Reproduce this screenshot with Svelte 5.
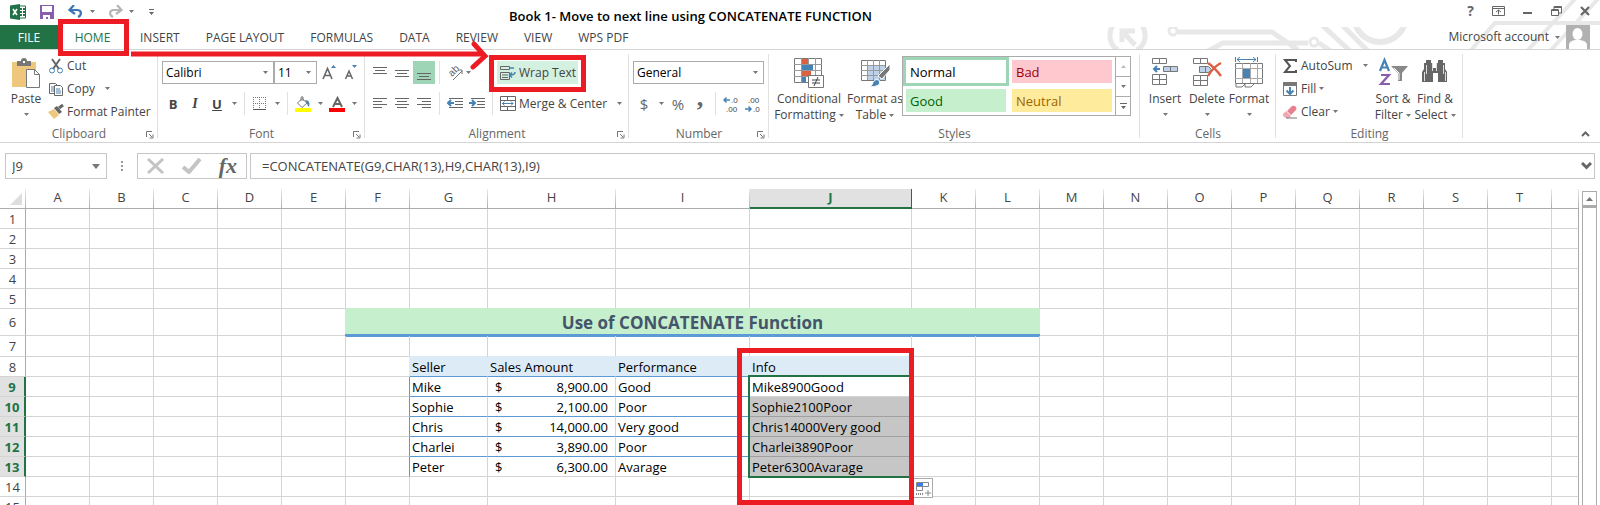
<script>
  const tabs = ['INSERT', 'PAGE LAYOUT', 'FORMULAS', 'DATA', 'REVIEW', 'VIEW', 'WPS PDF']

  const columns = [
    ...'ABCDEF'.split('').map(name => ({ name, width: 64 })),
    { name: 'G', width: 78 },
    { name: 'H', width: 128 },
    { name: 'I', width: 134 },
    { name: 'J', width: 162 },
    ...'KLMNOPQRST'.split('').map(name => ({ name, width: 64 }))
  ]
  const rows = Array.from({ length: 15 }, (_, i) => i + 1)

  const sellers = [
    { seller: 'Mike', amount: '8,900.00', performance: 'Good', info: 'Mike8900Good' },
    { seller: 'Sophie', amount: '2,100.00', performance: 'Poor', info: 'Sophie2100Poor' },
    { seller: 'Chris', amount: '14,000.00', performance: 'Very good', info: 'Chris14000Very good' },
    { seller: 'Charlei', amount: '3,890.00', performance: 'Poor', info: 'Charlei3890Poor' },
    { seller: 'Peter', amount: '6,300.00', performance: 'Avarage', info: 'Peter6300Avarage' }
  ]

  const cells = { G8: 'Seller', H8: 'Sales Amount', I8: 'Performance', J8: 'Info' }
  sellers.forEach((s, i) => {
    cells['G' + (i + 9)] = s.seller
    cells['H' + (i + 9)] = s.amount
    cells['I' + (i + 9)] = s.performance
    cells['J' + (i + 9)] = s.info
  })

  const isSelected = row => row > 8 && row < 14

  function cellClass (col, row) {
    if (row === 8) {
      if (col === 'G') return 'head first'
      if ('HI'.includes(col)) return 'head'
      if (col === 'J') return 'head last'
    }
    if (!isSelected(row)) return ''
    if (col === 'F') return 'edge'
    if ('GHI'.includes(col)) return row < 13 ? 'ruled' : ''
    if (col === 'J') return row === 9 ? 'active' : 'picked'
    return ''
  }
</script>

{#snippet caret()}
  <svg class="caret" width="5" height="3" viewBox="0 0 5 3" aria-hidden="true"><path d="M0 0h5L2.500 3z" fill="#777" /></svg>
{/snippet}

{#snippet launcher(name)}
  <button class="launcher" aria-label={name}>
    <svg width="8" height="8" viewBox="0 0 8 8"><path d="M.5 6V.5H6M3 3l3 3M7 3.500V7H3.500" fill="none" stroke="#777" /></svg>
  </button>
{/snippet}

<div class="excel">
  <header>
    <svg class="circuit" width="520" height="49" viewBox="0 0 520 49" fill="none" stroke="#e8e8e8" stroke-width="5" aria-hidden="true">
      <defs><clipPath id="lower"><path d="M0 27h520v22H0z" /></clipPath></defs>
      <g clip-path="url(#lower)">
        <path d="M38 21a17 17 0 0 0 0 29M57 21a17 17 0 0 1 0 29" />
        <path d="M42 42V31h13M43 32l12 13" />
        <circle cx="93" cy="31" r="4" stroke-width="3" />
        <path d="M98 32h94l26 18M126 52l17-9h85M239 43l13 9M242 25l28 26M262 25l26 26" />
        <circle cx="234" cy="42" r="4" stroke-width="3" />
        <circle cx="300" cy="16" r="26" stroke-width="6" />
      </g>
      <path d="M391 50l24-27h105M448 50l47-51M471 50l47-51" stroke-width="4" />
    </svg>

    <div class="titlebar">
      <div class="quick">
        <svg width="16" height="16" viewBox="0 0 16 16" aria-hidden="true">
          <path d="M9 2h6.500v12H9z" fill="#fff" stroke="#217346" />
          <path d="M10 4h2v2h-2zm3 0h2v2h-2zm-3 3h2v2h-2zm3 0h2v2h-2zm-3 3h2v2h-2zm3 0h2v2h-2z" fill="#217346" />
          <path d="M0 1.500L10 0v16L0 14.500z" fill="#217346" />
          <path d="M3 5l4 6M7 5l-4 6" stroke="#fff" stroke-width="1.600" />
        </svg>
        <button class="save" aria-label="Save">
          <svg width="14" height="14" viewBox="0 0 14 14"><path d="M0 0h14v14H0z" fill="#8a5cad" /><path d="M2 1h10v6H2zM3 10h7v4H8v-2H6v2H3z" fill="#fff" /></svg>
        </button>
        <button class="undo" aria-label="Undo">
          <svg width="16" height="14" viewBox="0 0 16 14"><path d="M6 0L1.500 5 7 9M2 5h7c5 0 5 5 1 7" fill="none" stroke="#3c76b4" stroke-width="2.200" /></svg>
        </button>
        {@render caret()}
        <button class="redo" aria-label="Redo">
          <svg width="16" height="14" viewBox="0 0 16 14"><path d="M10 0l4.500 5L9 9M14 5H7C2 5 2 10 6 12" fill="none" stroke="#b5b5b5" stroke-width="2.200" /></svg>
        </button>
        {@render caret()}
        <button class="customize" aria-label="Customize Quick Access Toolbar">
          <svg width="7" height="6" viewBox="0 0 7 6"><path d="M1 0h5v1H1zM1 3h5L3.500 6z" fill="#666" /></svg>
        </button>
      </div>
      <h1>Book 1- Move to next line using CONCATENATE FUNCTION</h1>
      <div class="window">
        <button class="help" aria-label="Help">?</button>
        <button aria-label="Ribbon Display Options">
          <svg width="13" height="10" viewBox="0 0 13 10"><path d="M.5.5h12v9H.5zM0 2.500h13M6.500 8.500V4M4 6l2.500-2L9 6" fill="none" stroke="#666" /></svg>
        </button>
        <button aria-label="Minimize">
          <svg width="10" height="10" viewBox="0 0 10 10"><path d="M0 6h9v2H0z" fill="#666" /></svg>
        </button>
        <button aria-label="Restore">
          <svg width="11" height="10" viewBox="0 0 11 10"><path d="M.5 3.500h7v6h-7zM0 4.500h8M3 3V.5h7.500V7H8M3 1.500h8" fill="none" stroke="#666" /></svg>
        </button>
        <button aria-label="Close">
          <svg width="10" height="10" viewBox="0 0 10 10"><path d="M1 1l8 8M9 1L1 9" stroke="#666" stroke-width="2.200" /></svg>
        </button>
      </div>
    </div>

    <nav>
      <button class="file">FILE</button>
      <button class="home">HOME<span class="mark"></span></button>
      {#each tabs as tab}
        <button>{tab}</button>
      {/each}
      <button class="account">
        Microsoft account
        {@render caret()}
        <svg width="24" height="24" viewBox="0 0 24 24" aria-hidden="true"><path d="M0 0h24v24H0z" fill="#b1b1b1" /><ellipse cx="11.500" cy="9" rx="5" ry="6" fill="#fff" /><path d="M3 24v-4q0-4 6-5h5q7 1 7 5v4z" fill="#fff" /></svg>
      </button>
    </nav>
  </header>

  <div class="ribbon">
    <section class="clipboard">
      <div class="content">
        <button class="big paste">
          <svg width="30" height="32" viewBox="0 0 30 32"><path d="M1 5h24v25H1z" fill="#eec77d" /><path d="M6 4h4q0-3 3-3t3 3h4v5H6z" fill="#777" /><path d="M12 4h2v2h-2z" fill="#fff" /><path d="M15.500 12.500h8l5 5v13h-13z" fill="#fff" stroke="#777" /><path d="M23.500 12.500v5h5" fill="none" stroke="#777" /></svg>
          <span>Paste</span>
          {@render caret()}
        </button>
        <div class="stack">
          <button>
            <svg width="16" height="16" viewBox="0 0 16 16" fill="none"><path d="M4 1l7 10M12 1L5 11" stroke="#666" stroke-width="2" /><circle cx="4" cy="12.500" r="2.500" stroke="#4682b4" /><circle cx="12" cy="12.500" r="2.500" stroke="#4682b4" /></svg>
            Cut
          </button>
          <button>
            <svg width="16" height="16" viewBox="0 0 16 16" fill="#fff" stroke="#666"><path d="M1.500 2.500h6l2 2v8h-8z" /><path d="M3 6h3M3 8h3M3 10h3" stroke="#4682b4" /><path d="M6.500 4.500h6l2 2v8h-8z" /><path d="M8 8h4M8 10h5M8 12h5" stroke="#4682b4" /></svg>
            Copy
            <span class="spaced">{@render caret()}</span>
          </button>
          <button>
            <svg width="16" height="16" viewBox="0 0 16 16"><path d="M0 8l6-3 5 6-5 4z" fill="#eec77d" /><path d="M6 4l3-2 5 6-3 2z" fill="#666" /><path d="M11 4l4-3" stroke="#666" stroke-width="3" /></svg>
            Format Painter
          </button>
        </div>
      </div>
      <h2>Clipboard</h2>
      {@render launcher('Clipboard settings')}
    </section>

    <section class="font">
      <div class="content rows">
        <div class="row">
          <label class="combo family"><select aria-label="Font"><option>Calibri</option></select>{@render caret()}</label>
          <label class="combo size"><select aria-label="Font size"><option>11</option></select>{@render caret()}</label>
          <button class="tool" aria-label="Increase font size">
            <svg width="16" height="16" viewBox="0 0 16 16"><path d="M2 14L6.500 3.500 11 14M3.500 10.500h6" fill="none" stroke="#666" stroke-width="1.600" /><path d="M10 3l2.500-3L15 3z" fill="#4682b4" /></svg>
          </button>
          <button class="tool" aria-label="Decrease font size">
            <svg width="16" height="16" viewBox="0 0 16 16"><path d="M2.500 14L6 6l3.500 8M3.500 11h5" fill="none" stroke="#666" stroke-width="1.500" /><path d="M9 0l2.500 3L14 0z" fill="#4682b4" /></svg>
          </button>
        </div>
        <div class="row">
          <button class="tool bold">B</button>
          <button class="tool italic">I</button>
          <button class="tool underline">U</button>
          <button class="drop" aria-label="Underline styles">{@render caret()}</button>
          <i class="rule"></i>
          <button class="tool" aria-label="Borders">
            <svg width="14" height="14" viewBox="0 0 14 14" fill="none" stroke="#777"><path d="M.5 0v12M6.500 0v12M12.500 0v12M0 .5h13M0 6.500h13" stroke-dasharray="1 1" /><path d="M0 12.500h13" stroke="#555" /></svg>
          </button>
          <button class="drop" aria-label="Border styles">{@render caret()}</button>
          <i class="rule"></i>
          <button class="tool" aria-label="Fill color">
            <svg width="16" height="16" viewBox="0 0 16 16"><path d="M2.500 7L7 2.500 12 7l-5 4.500zM6 5V2q0-2 2-1v4" fill="#fff" stroke="#777" /><path d="M10 4q6 0 4 7-2-2-2-4z" fill="#4682b4" /><path d="M0 12h16v4H0z" fill="#ff0" /></svg>
          </button>
          <button class="drop" aria-label="Fill colors">{@render caret()}</button>
          <button class="tool" aria-label="Font color">
            <svg width="16" height="16" viewBox="0 0 16 16"><path d="M4 11L8.500 2 13 11M5.500 8h6" fill="none" stroke="#666" stroke-width="2" /><path d="M0 12h16v4H0z" fill="red" /></svg>
          </button>
          <button class="drop" aria-label="Font colors">{@render caret()}</button>
        </div>
      </div>
      <h2>Font</h2>
      {@render launcher('Font settings')}
    </section>

    <section class="alignment">
      <div class="content rows">
        <div class="row">
          <button class="tool" aria-label="Top align"><svg width="14" height="16" viewBox="0 0 14 16"><path d="M0 2h14v1H0zM2 5h10v1H2zM0 8h14v1H0z" fill="#666" /></svg></button>
          <button class="tool" aria-label="Middle align"><svg width="14" height="16" viewBox="0 0 14 16"><path d="M0 5h14v1H0zM2 8h10v1H2zM0 11h14v1H0z" fill="#666" /></svg></button>
          <button class="tool on" aria-label="Bottom align"><svg width="14" height="16" viewBox="0 0 14 16"><path d="M0 8h14v1H0zM2 11h10v1H2zM0 14h14v1H0z" fill="#666" /></svg></button>
          <i class="rule"></i>
          <button class="tool" aria-label="Orientation">
            <svg width="20" height="20" viewBox="0 0 20 20"><text x="0" y="0" transform="translate(7 14) rotate(-45)" class="ab">ab</text><path d="M8 17l9-9M13 7h4v4" fill="none" stroke="#777" /></svg>
          </button>
          <button class="drop wide" aria-label="Orientation options">{@render caret()}</button>
          <i class="rule"></i>
          <button class="wrap">
            <svg width="16" height="16" viewBox="0 0 16 16" fill="none" stroke="#666"><path d="M.5 1.500h9v3h-9zM.5 7.500h9v7h-9zM2 10h6M2 12.500h6" /><path d="M10 3h4M15 7q0 3-5 3M12 7.500L9.500 10l2.500 2.500" stroke="#4682b4" stroke-width="1.500" /></svg>
            Wrap Text
            <span class="mark"></span>
          </button>
        </div>
        <div class="row">
          <button class="tool" aria-label="Align left"><svg width="14" height="13" viewBox="0 0 14 13"><path d="M0 1h14v1H0zM0 4h9v1H0zM0 7h14v1H0zM0 10h9v1H0z" fill="#666" /></svg></button>
          <button class="tool" aria-label="Center"><svg width="14" height="13" viewBox="0 0 14 13"><path d="M0 1h14v1H0zM2 4h10v1H2zM0 7h14v1H0zM2 10h10v1H2z" fill="#666" /></svg></button>
          <button class="tool" aria-label="Align right"><svg width="14" height="13" viewBox="0 0 14 13"><path d="M0 1h14v1H0zM5 4h9v1H5zM0 7h14v1H0zM5 10h9v1H5z" fill="#666" /></svg></button>
          <i class="rule"></i>
          <button class="tool" aria-label="Decrease indent"><svg width="16" height="13" viewBox="0 0 16 13"><path d="M2 1h14v1H2zM8 4h8v1H8zM8 7h8v1H8zM2 10h14v1H2z" fill="#666" /><path d="M7 6H1M4 3L1 6l3 3" fill="none" stroke="#4682b4" stroke-width="2" /></svg></button>
          <button class="tool" aria-label="Increase indent"><svg width="16" height="13" viewBox="0 0 16 13"><path d="M2 1h14v1H2zM8 4h8v1H8zM8 7h8v1H8zM2 10h14v1H2z" fill="#666" /><path d="M0 6h6M3 3l3 3-3 3" fill="none" stroke="#4682b4" stroke-width="2" /></svg></button>
          <i class="rule"></i>
          <button class="merge">
            <svg width="16" height="16" viewBox="0 0 16 16" fill="none" stroke="#666"><path d="M.5.5h15v14H.5zM0 4.500h16M0 10.500h16M7.500 0v4M7.500 11v4" /><path d="M2 7.500h11M4.500 5.500l-2 2 2 2M11 5.500l2 2-2 2" stroke="#4682b4" /></svg>
            Merge &amp; Center
            <span class="spaced">{@render caret()}</span>
          </button>
        </div>
      </div>
      <h2>Alignment</h2>
      {@render launcher('Alignment settings')}
    </section>

    <section class="number">
      <div class="content rows">
        <div class="row">
          <label class="combo format"><select aria-label="Number format"><option>General</option></select>{@render caret()}</label>
        </div>
        <div class="row">
          <button class="tool sign">$</button>
          <button class="drop" aria-label="Accounting formats">{@render caret()}</button>
          <button class="tool sign">%</button>
          <button class="tool comma">,</button>
          <i class="rule"></i>
          <button class="tool" aria-label="Increase decimal">
            <svg width="16" height="18" viewBox="0 0 16 18"><path d="M7 5H1M3.500 2.500L1 5l2.500 2.500" fill="none" stroke="#4682b4" stroke-width="1.500" /><text x="8" y="8" class="digits">.0</text><text x="3" y="17" class="digits">.00</text></svg>
          </button>
          <button class="tool" aria-label="Decrease decimal">
            <svg width="16" height="18" viewBox="0 0 16 18"><path d="M0 14h6M3.500 11.500L6 14l-2.500 2.500" fill="none" stroke="#4682b4" stroke-width="1.500" /><text x="3" y="8" class="digits">.00</text><text x="8" y="17" class="digits">.0</text></svg>
          </button>
        </div>
      </div>
      <h2>Number</h2>
      {@render launcher('Number settings')}
    </section>

    <section class="styles">
      <div class="content">
        <button class="big conditional">
          <svg width="30" height="32" viewBox="0 0 30 32"><path d="M.5 1.500h27v24H.5z" fill="#fff" stroke="#777" /><path d="M0 7.500h28M0 13.500h28M0 19.500h28M7.500 1v25M14.500 1v25M21.500 1v25" stroke="#999" /><path d="M8 2h6v5H8zM8 14h9v5H8z" fill="#dc6142" /><path d="M8 8h11v5H8zM8 20h4v5H8z" fill="#4682b4" /><path d="M14.500 18.500h15v12h-15z" fill="#fff" stroke="#777" /><path d="M18 23h8M18 26h8M24 20l-4 9" stroke="#444" /></svg>
          <span>Conditional<br>Formatting {@render caret()}</span>
        </button>
        <button class="big astable">
          <svg width="30" height="32" viewBox="0 0 30 32"><path d="M1.500 3.500h24v20h-24z" fill="#fff" stroke="#777" /><path d="M8 9h17v14H8z" fill="#bdd2e8" /><path d="M1 8.500h24M1 13.500h24M1 18.500h24M7.500 3v20M13.500 3v20M19.500 3v20" stroke="#999" /><path d="M30 7v6l-8 9-4-3z" fill="#777" stroke="#fff" /><path d="M8 30q4 0 5-5 3-4 6-2 4 7-11 7z" fill="#4682b4" stroke="#fff" /></svg>
          <span>Format as<br>Table {@render caret()}</span>
        </button>
        <div class="gallery">
          <button class="normal">Normal</button>
          <button class="bad">Bad</button>
          <button class="good">Good</button>
          <button class="neutral">Neutral</button>
          <div class="pager">
            <button aria-label="Previous styles"><svg width="5" height="3" viewBox="0 0 5 3"><path d="M0 3h5L2.500 0z" fill="#bbb" /></svg></button>
            <button aria-label="Next styles">{@render caret()}</button>
            <button aria-label="More styles"><svg width="7" height="6" viewBox="0 0 7 6"><path d="M0 0h7v1H0zM1 3h5L3.500 6z" fill="#666" /></svg></button>
          </div>
        </div>
      </div>
      <h2>Styles</h2>
    </section>

    <section class="cells">
      <div class="content">
        <button class="big">
          <svg width="28" height="32" viewBox="0 0 28 32" fill="#fff" stroke="#777"><path d="M1.500 1.500h14v5h-14zM8.500 1v6M1.500 17.500h14v10h-14zM8.500 17v11M1 22.500h15" /><path d="M12.500 9.500h14v5h-14zM19.500 9v6" fill="#bdd2e8" /><path d="M9 12H3M6 9l-3 3 3 3" fill="none" stroke="#4682b4" stroke-width="2" /></svg>
          <span>Insert</span>
          {@render caret()}
        </button>
        <button class="big">
          <svg width="30" height="32" viewBox="0 0 30 32" fill="#fff" stroke="#777"><path d="M1.500 1.500h14v5h-14zM8.500 1v6M1.500 18.500h14v10h-14zM8.500 18v11M1 23.500h15" /><path d="M7.500 9.500h9l3 3-3 3h-9zM13.500 9v6" fill="#bdd2e8" /><path d="M16 6q6 4 13 13M29 6q-8 4-13 13" fill="none" stroke="#dc6142" stroke-width="2.500" /></svg>
          <span>Delete</span>
          {@render caret()}
        </button>
        <button class="big">
          <svg width="28" height="32" viewBox="0 0 28 32" fill="none" stroke="#777"><path d="M.5 6.500h27v20H.5z" fill="#fff" /><path d="M0 11.500h28M0 21.500h28M7.500 6v20M15.500 6v20M22.500 6v20" stroke="#aaa" /><path d="M8 12h7v9H8z" fill="#4682b4" stroke="none" /><path d="M1 27v3h6l3-3v3h6l3-3" /><path d="M.5 0v5M22.500 0v5M2 2.500h19M5 0L2 2.500 5 5M18 0l3 2.500L18 5" stroke="#4682b4" /></svg>
          <span>Format</span>
          {@render caret()}
        </button>
      </div>
      <h2>Cells</h2>
    </section>

    <section class="editing">
      <div class="content">
        <div class="stack">
          <button>
            <svg width="16" height="16" viewBox="0 0 16 16"><path d="M14 4V2H3l5 6-5 6h11v-2" fill="none" stroke="#555" stroke-width="2" /></svg>
            AutoSum
            <span class="spaced">{@render caret()}</span>
          </button>
          <button>
            <svg width="16" height="16" viewBox="0 0 16 16"><path d="M1.500 1.500h13v13h-13z" fill="#fff" stroke="#777" /><path d="M1 1h14v4H1z" fill="#777" /><path d="M8 6v7M4.500 9.500L8 13l3.500-3.500" fill="none" stroke="#4682b4" stroke-width="2" /></svg>
            Fill {@render caret()}
          </button>
          <button>
            <svg width="16" height="16" viewBox="0 0 16 16"><path d="M5 7l5-5q2-1 4 1 1 2 0 3L9 11z" fill="#e8808f" /><path d="M1 10l3-3 5 5-2 2H4q-4-2-3-4z" fill="#f0a9b3" /><path d="M4 14h11" stroke="#777" /></svg>
            Clear {@render caret()}
          </button>
        </div>
        <button class="big sort">
          <svg width="30" height="32" viewBox="0 0 30 32" fill="none"><path d="M2 14L6.500 3 11 14M3.500 10.500h6" stroke="#4682b4" stroke-width="2.200" /><path d="M3 18h8L3 27h9" stroke="#8a5cad" stroke-width="2.200" /><path d="M13 9h17l-6 7v8h-4v-8z" fill="#888" /><path d="M16 11l5 5v7" stroke="#fff" /></svg>
          <span>Sort &amp;<br>Filter {@render caret()}</span>
        </button>
        <button class="big find">
          <svg width="28" height="32" viewBox="0 0 28 32"><path d="M5 3h5v3h2v5h3V6h2V3h5v3h2v6l2 3v10h-9v-9h-5v9H1V15l2-3V6h2z" fill="#666" /><path d="M5.500 8v9M3.500 15v9M22.500 8v9M24.500 15v9M11.500 6v8M15.500 6v8" stroke="#ddd" fill="none" /></svg>
          <span>Find &amp;<br>Select {@render caret()}</span>
        </button>
      </div>
      <h2>Editing</h2>
    </section>

    <button class="collapse" aria-label="Collapse the ribbon">
      <svg width="9" height="6" viewBox="0 0 9 6"><path d="M1 5l3.500-3.500L8 5" fill="none" stroke="#666" stroke-width="2" /></svg>
    </button>
  </div>

  <div class="formulabar">
    <label class="namebox">
      <input value="J9" aria-label="Name box" />
      <svg width="8" height="5" viewBox="0 0 8 5"><path d="M0 0h8L4 5z" fill="#777" /></svg>
    </label>
    <i class="dots"></i>
    <div class="entry">
      <button aria-label="Cancel"><svg width="18" height="16" viewBox="0 0 18 16"><path d="M1 1l15 14M16 1L1 15" stroke="#c4c4c4" stroke-width="3" /></svg></button>
      <button aria-label="Enter"><svg width="20" height="16" viewBox="0 0 20 16"><path d="M1 9l6 5L18 1" fill="none" stroke="#c4c4c4" stroke-width="4" /></svg></button>
      <button class="fx" aria-label="Insert function">fx</button>
    </div>
    <label class="formula">
      <input value="=CONCATENATE(G9,CHAR(13),H9,CHAR(13),I9)" aria-label="Formula" />
      <svg width="11" height="8" viewBox="0 0 11 8"><path d="M1 1l4.500 4.500L10 1" fill="none" stroke="#666" stroke-width="3" /></svg>
    </label>
  </div>

  <main>
    <div class="sheet">
      <table>
        <colgroup>
          <col style="width: 26px">
          {#each columns as col}
            <col style="width: {col.width}px">
          {/each}
          <col>
        </colgroup>
        <thead>
          <tr>
            <th class="corner" aria-label="Select all"><svg width="12" height="12" viewBox="0 0 12 12"><path d="M12 0v12H0z" fill="#dedede" /></svg></th>
            {#each columns as col}
              <th class:selected={col.name === 'J'}>{col.name}</th>
            {/each}
            <th class="rest"></th>
          </tr>
        </thead>
        <tbody>
          {#each rows as row}
            <tr class:tall={row === 6} class:seventh={row === 7}>
              <th class:selected={isSelected(row)}>{row}</th>
              {#each columns as col}
                {#if row === 6 && col.name === 'F'}
                  <td class="banner" colspan="7"><strong>Use of CONCATENATE Function</strong></td>
                {:else if !(row === 6 && 'GHIJKL'.includes(col.name))}
                  <td class={cellClass(col.name, row)}>
                    {#if col.name === 'H' && isSelected(row)}
                      <span class="money"><span>$</span><span>{cells['H' + row]}</span></span>
                    {:else}
                      {cells[col.name + row] ?? ''}
                    {/if}
                    {#if col.name === 'J' && row === 9}
                      <div class="selection"></div>
                      <span class="mark"></span>
                      <button class="fill" aria-label="Auto fill options">
                        <svg width="15" height="15" viewBox="0 0 15 15"><path d="M.5 1.500h12v4H.5zM.5 5.500h6v4h-6z" fill="#fff" stroke="#888" /><path d="M1 2h6v3H1z" fill="#3c7cf0" /><path d="M0 13h7" stroke="#888" stroke-width="2" stroke-dasharray="1 1" /><path d="M12 9v6M9 12h6" stroke="#888" /></svg>
                      </button>
                    {/if}
                  </td>
                {/if}
              {/each}
              <td></td>
            </tr>
          {/each}
        </tbody>
      </table>
    </div>
    <div class="scrollbar">
      <button aria-label="Scroll up"><svg width="7" height="4" viewBox="0 0 7 4"><path d="M0 4h7L3.500 0z" fill="#777" /></svg></button>
      <div class="thumb"></div>
    </div>
  </main>

  <!-- arrow from the Home tab to Wrap Text -->
  <svg class="arrow" width="358" height="30" viewBox="0 0 358 30" fill="none" stroke="#ed1c24" aria-hidden="true">
    <path d="M0 13h352" stroke-width="5" />
    <path d="M343 3l11 12-12 11" stroke-width="5" stroke-linecap="round" />
  </svg>
</div>

<style>
  :global(body) {
    margin: 0;
  }
  .excel {
    --line: #d4d4d4;
    --green: #217346;
    --blue: #5b9bd5;
    --red: #ed1c24;
    position: relative;
    display: flex;
    flex-direction: column;
    height: 100vh;
    overflow: hidden;
    background: #fff;
    color: #444;
    font: 12px/16px 'Open Sans', 'Noto Sans', sans-serif;
  }
  button {
    display: flex;
    align-items: center;
    justify-content: center;
    padding: 0;
    border: 0;
    background: none;
    color: inherit;
    font: inherit;
    white-space: nowrap;
  }
  svg {
    flex: none;
  }
  input, select {
    min-width: 0;
    width: 100%;
    padding: 0;
    border: 0;
    outline: 0;
    appearance: none;
    background: none;
    color: inherit;
    font: inherit;
  }
  h1, h2 {
    margin: 0;
  }
  .mark {
    position: absolute;
    border: 5px solid var(--red);
    pointer-events: none;
  }
  .arrow {
    position: absolute;
    left: 131px;
    top: 41px;
  }

  /* title bar and tabs */
  header {
    position: relative;
    border-bottom: 1px solid var(--line);
  }
  .circuit {
    position: absolute;
    right: 0;
    top: 0;
  }
  .titlebar {
    position: relative;
    display: flex;
    height: 25px;
  }
  .quick {
    display: flex;
    align-items: center;
    box-sizing: border-box;
    width: 509px;
    padding: 0 0 2px 10px;
  }
  .save {
    margin: 0 14px;
  }
  .undo, .redo {
    margin-right: 6px;
  }
  .redo {
    margin-left: 12px;
  }
  .customize {
    margin-left: 14px;
  }
  h1 {
    padding-top: 8px;
    color: #000;
    font: 600 13px/16px 'Open Sans', 'Noto Sans', sans-serif;
  }
  .window {
    display: flex;
    align-items: center;
    gap: 18px;
    margin-left: auto;
    padding: 0 10px 3px 0;
  }
  .help {
    color: #666;
    font-weight: bold;
    font-size: 14px;
  }
  nav {
    position: relative;
    display: flex;
    height: 24px;
  }
  nav button {
    padding: 2px 13px 0;
  }
  nav .file {
    width: 58px;
    background: var(--green);
    color: #fff;
  }
  nav .home {
    position: relative;
    width: 69px;
    color: var(--green);
  }
  .home .mark {
    inset: -6px -2px -7px 0;
    z-index: 1;
  }
  nav .account {
    gap: 6px;
    margin-left: auto;
    padding: 0 10px 0 0;
  }

  /* ribbon */
  .ribbon {
    display: flex;
    flex: none;
    height: 88px;
    padding-top: 4px;
    border-bottom: 1px solid var(--line);
  }
  section {
    position: relative;
    box-sizing: border-box;
    flex: none;
  }
  section::after {
    content: '';
    position: absolute;
    right: 0;
    top: 0;
    bottom: 4px;
    border-right: 1px solid #e1e1e1;
  }
  .clipboard { width: 158px; }
  .font { width: 207px; }
  .alignment { width: 264px; }
  .number { width: 140px; }
  .styles { width: 371px; }
  .cells { width: 136px; }
  .editing { width: 187px; }
  .content {
    display: flex;
    height: 72px;
  }
  .content.rows {
    flex-direction: column;
    gap: 8px;
    box-sizing: border-box;
    padding: 7px 0 0 4px;
  }
  h2 {
    color: #666;
    font: 12px/16px 'Open Sans', 'Noto Sans', sans-serif;
    text-align: center;
  }
  .launcher {
    position: absolute;
    right: 4px;
    bottom: 3px;
  }
  .row {
    display: flex;
    align-items: center;
    height: 23px;
  }
  .rule {
    width: 1px;
    height: 23px;
    margin: 0 4px;
    background: #e1e1e1;
  }
  .tool {
    width: 22px;
    height: 23px;
  }
  .tool.on {
    background: #9fd5b7;
  }
  .drop {
    width: 12px;
    height: 22px;
  }
  .drop.wide {
    width: 22px;
    justify-content: flex-start;
  }
  .bold {
    font-weight: bold;
    font-size: 13px;
  }
  .italic {
    font: italic bold 14px 'Liberation Serif', serif;
  }
  .underline {
    font-weight: bold;
    font-size: 13px;
    text-decoration: underline;
  }
  .sign {
    color: #666;
    font-size: 15px;
  }
  .comma {
    padding-bottom: 12px;
    color: #666;
    font: bold 26px/20px 'Liberation Serif', serif;
  }
  .ab {
    fill: #666;
    font: 10px 'Liberation Sans', sans-serif;
  }
  .digits {
    fill: #444;
    font: 8px 'Liberation Sans', sans-serif;
  }
  .combo {
    position: relative;
    display: flex;
    align-items: center;
    box-sizing: border-box;
    height: 23px;
    padding: 0 3px;
    border: 1px solid #ababab;
    color: #000;
  }
  .combo .caret {
    position: absolute;
    right: 5px;
  }
  .family { width: 112px; }
  .size { width: 43px; margin-right: 1px; }
  .format { width: 131px; }
  .stack {
    display: flex;
    flex-direction: column;
  }
  .stack button, .wrap, .merge {
    justify-content: flex-start;
    gap: 3px;
    height: 23px;
  }
  .spaced {
    display: flex;
    margin-left: 7px;
  }
  .wrap {
    position: relative;
    width: 81px;
    padding-left: 3px;
    background: #d3f0e0;
  }
  .wrap .mark {
    inset: -6px -8px -8px;
  }
  .merge {
    padding-left: 3px;
  }
  .big {
    flex-direction: column;
    justify-content: flex-start;
    padding-top: 3px;
  }
  .big > span {
    margin-top: 2px;
  }
  .big > .caret {
    margin-top: 6px;
  }
  span .caret {
    vertical-align: middle;
  }
  .paste {
    width: 30px;
    margin: 0 7px 0 11px;
  }
  .conditional {
    width: 78px;
    margin-left: 1px;
  }
  .astable {
    width: 54px;
  }
  .gallery {
    display: grid;
    grid-template-columns: 106px 106px 15px;
    grid-template-rows: 29px 29px;
    box-sizing: border-box;
    width: 229px;
    height: 60px;
    margin-top: 2px;
    border: 1px solid #ababab;
  }
  .gallery > button {
    justify-content: flex-start;
    margin: 3px;
    padding-left: 4px;
    font-size: 13px;
  }
  .gallery .normal {
    margin: 0;
    padding-left: 4px;
    border: 3px solid #9fd5b7;
    color: #000;
  }
  .bad {
    background: #ffc7ce;
    color: #9c0006;
  }
  .good {
    background: #c6efce;
    color: #006100;
  }
  .neutral {
    background: #ffeb9c;
    color: #9c6500;
  }
  .pager {
    display: grid;
    grid-template-rows: repeat(3, 1fr);
    grid-column: 3;
    grid-row: 1 / 3;
    border-left: 1px solid #ababab;
  }
  .pager button + button {
    border-top: 1px solid #ababab;
  }
  .cells .content {
    padding-left: 4px;
  }
  .cells .big {
    width: 42px;
  }
  .editing .stack {
    width: 90px;
    padding-left: 6px;
  }
  .sort {
    width: 42px;
  }
  .find {
    width: 42px;
  }
  .collapse {
    align-self: flex-end;
    margin: 0 10px 5px auto;
  }

  /* formula bar */
  .formulabar {
    display: flex;
    align-items: center;
    flex: none;
    height: 26px;
    padding: 10px 5px;
    font-size: 13px;
  }
  .namebox, .entry, .formula {
    display: flex;
    align-items: center;
    box-sizing: border-box;
    height: 26px;
    padding: 0 6px;
    border: 1px solid #c6c6c6;
  }
  .namebox {
    width: 102px;
  }
  .dots {
    width: 2px;
    height: 10px;
    margin: 0 14px;
    background: repeating-linear-gradient(#999 0 2px, transparent 2px 4px);
  }
  .entry {
    justify-content: space-between;
    width: 110px;
    margin-right: 3px;
    padding: 0 9px;
  }
  .fx {
    color: #666;
    font: italic bold 22px/24px 'Liberation Serif', serif;
  }
  .formula {
    flex: 1;
    padding: 0 2px 0 11px;
  }

  /* sheet */
  main {
    display: flex;
    flex: 1;
    min-height: 0;
    padding-right: 3px;
  }
  .sheet {
    flex: 1;
    min-width: 0;
    overflow: hidden;
  }
  table {
    width: 100%;
    table-layout: fixed;
    border-spacing: 0;
    color: #000;
    font-size: 13px;
  }
  th {
    height: 19px;
    padding: 0;
    color: #444;
    font-weight: normal;
    line-height: 18px;
  }
  thead th {
    height: 17px;
    padding-bottom: 2px;
    line-height: 17px;
    border-bottom: 1px solid #ababab;
    border-right: 1px solid;
    border-image: linear-gradient(#eee, #ababab) 1;
    border-image-width: 0 1px 1px 0;
  }
  thead .corner {
    vertical-align: bottom;
    text-align: right;
    line-height: 0;
  }
  .corner svg {
    margin: 0 3px 1px 0;
  }
  thead th.selected {
    padding-bottom: 1px;
    border-bottom: 2px solid var(--green);
    border-image: none;
    background: #e1e1e1;
    color: var(--green);
    font-weight: bold;
  }
  tbody th {
    border-right: 1px solid #ababab;
    border-bottom: 1px solid var(--line);
  }
  tbody th.selected {
    border-right: 2px solid var(--green);
    background: #e1e1e1;
    color: var(--green);
    font-weight: bold;
  }
  td {
    position: relative;
    height: 19px;
    padding: 0 0 0 2px;
    border-right: 1px solid var(--line);
    border-bottom: 1px solid var(--line);
    line-height: 18px;
    white-space: nowrap;
  }
  td:last-child {
    border-right-color: #ababab;
  }
  .tall td {
    height: 26px;
  }
  .seventh td {
    height: 20px;
  }
  .tall .banner {
    height: 24px;
    padding: 2px 0 0;
    color: #44546a;
    font-size: 17px;
    text-align: center;
  }
  .banner::before {
    content: '';
    position: absolute;
    inset: -1px -1px -2px;
    border-bottom: 3px solid var(--blue);
    background: #c6efce;
  }
  .banner strong {
    position: relative;
  }
  .head {
    border-right-color: #ddebf7;
    border-bottom-color: var(--blue);
    background: #ddebf7;
    box-shadow: 0 -1px 0 #ddebf7;
  }
  .head.first {
    box-shadow: -1px -1px 0 #ddebf7;
  }
  .ruled {
    border-bottom-color: var(--blue);
  }
  .edge {
    border-right-color: var(--blue);
  }
  .picked {
    border-bottom-color: #a0a0a0;
    background: #c6c6c6;
  }
  .money {
    display: flex;
    justify-content: space-between;
    padding: 0 7px 0 5px;
  }
  .selection {
    position: absolute;
    z-index: 1;
    left: -2px;
    top: -2px;
    width: 162px;
    height: 99px;
    border: 2px solid var(--green);
  }
  td .mark {
    z-index: 2;
    left: -13px;
    top: -29px;
    width: 167px;
    height: 147px;
  }
  .fill {
    position: absolute;
    z-index: 1;
    left: 163px;
    top: 101px;
    width: 20px;
    height: 20px;
    border: 1px solid #ababab;
    background: #fff;
  }
  .scrollbar {
    display: flex;
    flex-direction: column;
    width: 15px;
    margin: 2px 0 0 3px;
  }
  .scrollbar button {
    height: 15px;
    border: 1px solid #ababab;
  }
  .thumb {
    flex: 1;
    border: 1px solid #ababab;
    border-top-width: 2px;
    border-bottom: 0;
  }
</style>
